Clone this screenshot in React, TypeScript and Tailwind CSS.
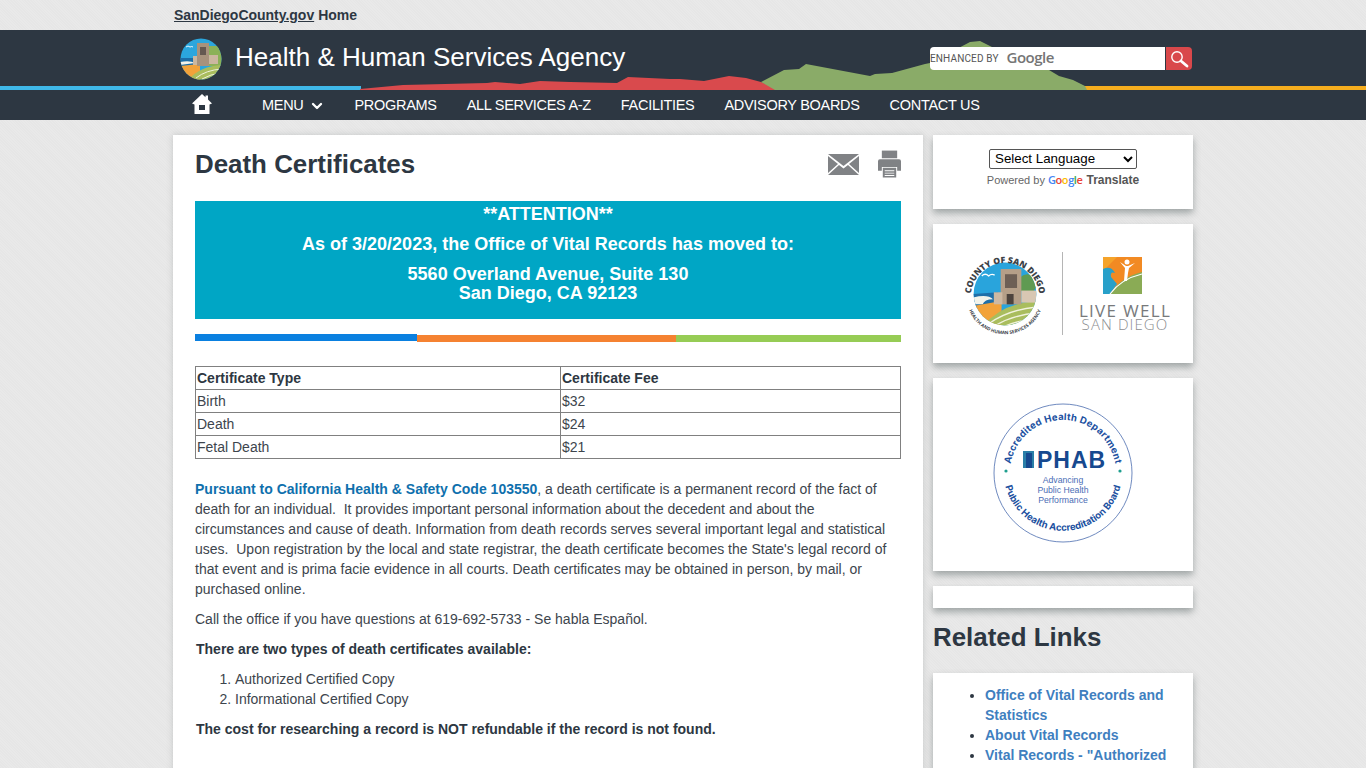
import { ChevronDown } from 'lucide-react';

const textureBg =
  'bg-[#e8e8e8] bg-[repeating-linear-gradient(45deg,#e6e6e6_0,#e6e6e6_1px,#e9e9e9_1px,#e9e9e9_2px)]';

function HillsBand() {
  return (
    <svg className="absolute left-0 top-0 w-[1366px] h-[60px]" viewBox="0 30 1366 60">
      <rect x="0" y="86" width="361" height="4" fill="#3fb8e8" />
      <rect x="1080" y="86" width="286" height="4" fill="#f5ad1e" />
      <polygon
        fill="#d94a4d"
        points="360,90 360,89 403,85 487,83 495,82 520,84 540,81 570,82 617,83 628,77 670,79 680,79 704,81 729,76 746,78 761,82 782,90"
      />
      <polygon
        fill="#8aab68"
        points="761,82 784,70 799,69 806,64 870,76 875,74 892,73 925,64 930,63 970,42 980,41 992,47 1049,70 1059,76 1073,80 1085,86 1087,90 775,90"
      />
    </svg>
  );
}

function CountySeal({ size }: { size: number }) {
  return (
    <svg width={size} height={size} viewBox="0 0 100 100">
      <defs>
        <path id="sealTop" d="M 10 54 A 40 40 0 1 1 90 54" />
        <path id="sealBottom" d="M 5 58 A 45.5 45.5 0 0 0 95 58" />
        <clipPath id="sealClip">
          <circle cx="50" cy="50" r="36.5" />
        </clipPath>
      </defs>
      <g clipPath="url(#sealClip)">
        <rect x="0" y="0" width="100" height="100" fill="#29a4dc" />
        <circle cx="76" cy="38" r="11" fill="#5f9a52" />
        <path d="M13 50 L42 48 L42 66 L13 66 Z" fill="#1f6fa8" />
        <path d="M13 54 Q30 50 36 56 Q26 56 24 62 L13 62 Z" fill="#f3f3ea" />
        <path d="M13 64 L46 58 L46 90 L13 90 Z" fill="#f2a23a" />
        <path d="M24 88 Q46 60 90 58 L90 95 L24 95 Z" fill="#a9bd5d" />
        <path d="M32 84 Q54 68 88 65 M38 87 Q60 74 88 72 M46 89 Q66 80 88 79" stroke="#f0f2dc" strokeWidth="1.6" fill="none" />
        <rect x="45" y="21" width="24" height="41" fill="#b59f88" />
        <rect x="37" y="48" width="10" height="14" fill="#cdb9a3" />
        <rect x="69" y="46" width="18" height="14" fill="#d8c7b3" />
        <rect x="50" y="27" width="14" height="16" fill="#6d5f55" />
        <rect x="52" y="50" width="8" height="12" fill="#4d433d" />
        <path d="M23 29 Q27 25 31 29 Q34 26 38 28" stroke="#fff" strokeWidth="1.5" fill="none" />
      </g>
      <text fontFamily="Open Sans, sans-serif" fontSize="10" fontWeight="800" fill="#3b4248">
        <textPath href="#sealTop" startOffset="50%" textAnchor="middle">
          COUNTY OF SAN DIEGO
        </textPath>
      </text>
      <text fontFamily="Open Sans, sans-serif" fontSize="5.4" fontWeight="700" fill="#3b4248">
        <textPath href="#sealBottom" startOffset="50%" textAnchor="middle">
          HEALTH AND HUMAN SERVICES AGENCY
        </textPath>
      </text>
    </svg>
  );
}

function HeaderLogo() {
  return (
    <svg width="42" height="42" viewBox="0 0 42 42">
      <defs>
        <clipPath id="hdrClip">
          <circle cx="21" cy="21" r="20.5" />
        </clipPath>
      </defs>
      <g clipPath="url(#hdrClip)">
        <rect width="42" height="42" fill="#2ba6dd" />
        <rect x="28" y="8" width="14" height="20" fill="#8bb158" />
        <path d="M0 20 L18 20 L14 28 L0 28 Z" fill="#1d6da6" />
        <path d="M0 24 Q10 22 15 25 L0 27 Z" fill="#f3f3ea" />
        <path d="M0 28 L20 26 L20 42 L0 42 Z" fill="#f2a23a" />
        <path d="M8 42 Q20 28 42 27 L42 42 Z" fill="#a9bd5d" />
        <path d="M16 40 Q26 32 42 31 M22 41 Q30 36 42 35" stroke="#eef0da" strokeWidth="1" fill="none" />
        <rect x="17" y="5" width="12" height="23" fill="#a8927c" />
        <rect x="13" y="18" width="4" height="9" fill="#cbb7a0" />
        <rect x="29" y="17" width="9" height="9" fill="#cbb7a0" />
        <rect x="20" y="9" width="6" height="8" fill="#655850" />
        <path d="M6 9 Q8 7 10 9 Q12 8 13 9" stroke="#fff" strokeWidth="0.9" fill="none" />
      </g>
    </svg>
  );
}

function LiveWellLogo() {
  return (
    <div className="flex flex-col items-center w-[88px]">
      <svg className="mr-[5px] mt-px" width="39" height="37" viewBox="0 0 39 37">
        <rect width="39" height="37" fill="#f28a23" />
        <path d="M0 0 H14 L0 14 Z" fill="#f5a32a" />
        <path d="M0 12 Q8 8 12 16 Q7 14 8 20 L14 27 L7 37 L0 37 Z" fill="#28a0c9" />
        <path d="M7 37 Q18 20 39 15 L39 37 Z" fill="#8aab55" />
        <path d="M7 37 Q18 22 39 17" stroke="#fff" strokeWidth="1.2" fill="none" />
        <circle cx="24" cy="5" r="2.5" fill="#fff" />
        <path d="M17 5 L22 11 L21 24 L24 24 L25 16 L26 11 L32 6 L25 9 L23 9 Z" fill="#fff" />
      </svg>
      <div className="mt-[9px] text-[17px] leading-[15px] tracking-[1.3px] text-[#77797b] font-['Open_Sans',sans-serif] whitespace-nowrap">
        LIVE WELL
      </div>
      <div className="text-[15px] leading-[13px] tracking-[1.1px] font-light text-[#8b8d8f] font-['Open_Sans',sans-serif] whitespace-nowrap">
        SAN DIEGO
      </div>
    </div>
  );
}

function PhabSeal() {
  return (
    <svg className="mb-[3px]" width="140" height="140" viewBox="0 0 140 140">
      <defs>
        <path id="phabTop" d="M 17.5 78 A 53.1 53.1 0 1 1 122.5 78" />
        <path id="phabBottom" d="M 11 76 A 59.5 59.5 0 0 0 129 76" />
      </defs>
      <circle cx="70" cy="70" r="69" fill="#fff" stroke="#4a6cae" strokeWidth="0.8" />
      <text fontFamily="Inter, sans-serif" fontSize="9.5" fontWeight="700" fill="#20509f" letterSpacing="0.25">
        <textPath href="#phabTop" startOffset="50%" textAnchor="middle">
          Accredited Health Department
        </textPath>
      </text>
      <text fontFamily="Inter, sans-serif" fontSize="9.5" fontWeight="700" fill="#20509f">
        <textPath href="#phabBottom" startOffset="50%" textAnchor="middle">
          Public Health Accreditation Board
        </textPath>
      </text>
      <circle cx="13" cy="68" r="1.6" fill="#1f9f8f" />
      <circle cx="127" cy="68" r="1.6" fill="#1f9f8f" />
      <path d="M30 48 H41 V65 H30 Z" fill="#2a7fa8" />
      <path d="M33 50 H39 V65 H33 Z" fill="#17498f" />
      <text x="44" y="65" fontFamily="Liberation Sans, sans-serif" fontSize="23" fontWeight="700" fill="#17498f" letterSpacing="1">
        PHAB
      </text>
      <text textAnchor="middle" fontFamily="Liberation Sans, sans-serif" fontSize="8.7" fill="#4a6db5">
        <tspan x="70" y="80">Advancing</tspan>
        <tspan x="70" y="90">Public Health</tspan>
        <tspan x="70" y="100">Performance</tspan>
      </text>
    </svg>
  );
}

function SideCard({ className, children }: { className: string; children?: React.ReactNode }) {
  return (
    <div className={`bg-white shadow-[0_4px_7px_rgba(70,85,85,0.45)] ${className}`}>{children}</div>
  );
}

const navItems = ['PROGRAMS', 'ALL SERVICES A-Z', 'FACILITIES', 'ADVISORY BOARDS', 'CONTACT US'];

const rows = [
  ['Birth', '$32'],
  ['Death', '$24'],
  ['Fetal Death', '$21'],
];

export default function App() {
  return (
    <div className={`h-[768px] overflow-hidden text-[#2d3742] font-['Liberation_Sans',Arial,sans-serif] ${textureBg}`}>
      {/* Top strip */}
      <div className="h-[30px] w-[1020px] mx-auto pl-px flex items-center text-sm font-bold tracking-[-0.02px]">
        <a href="#" className="underline">SanDiegoCounty.gov</a>
        <a href="#" className="ml-1">Home</a>
      </div>

      {/* Header */}
      <header className="relative h-[90px] bg-[#2d3742]">
        <HillsBand />
        <div className="relative w-[1020px] mx-auto">
          <div className="h-[60px] flex items-center">
            <div className="ml-[7px] mt-[-3px] w-[42px] h-[42px]">
              <HeaderLogo />
            </div>
            <div className="ml-[13px] mt-[-6px] text-[26px] text-white whitespace-nowrap">
              Health &amp; Human Services Agency
            </div>
            <div className="ml-auto mr-px mt-[-3px] flex items-center">
              <div className="w-[235px] h-[23px] bg-white rounded-l-[4px] flex items-center">
                <span className="text-[10px] tracking-[0.15px] text-[#555] font-['Roboto',sans-serif]">ENHANCED BY</span>
                <span className="ml-2 mt-[-3px] text-[15px] font-semibold text-[#757575] font-['Open_Sans',sans-serif] tracking-[-0.5px]">Google</span>
              </div>
              <button className="ml-px w-[26px] h-[23px] bg-[#d9484b] rounded-r-[4px] flex items-center justify-center">
                <svg width="20" height="20" viewBox="0 0 20 20" fill="none" stroke="#fff">
                  <circle cx="8" cy="8" r="5.2" strokeWidth="1.4" />
                  <path d="M12 12 L18 17" strokeWidth="2.8" strokeLinecap="round" />
                </svg>
              </button>
            </div>
          </div>
          <nav className="h-[30px] pt-[2px] flex items-center text-[14.5px] tracking-[-0.3px] text-white whitespace-nowrap">
            <a href="#" className="ml-[19px] w-[70px] mt-[-5px]">
              <svg width="20" height="20" viewBox="0 0 20 20" fill="#fff">
                <path
                  d="M10 0 L13.5 3.2 V1.5 H16 V5.6 L20 9.6 L17.5 10.5 V20 H2.5 V10.5 L0 9.6 Z M7 11 V16 H13 V11 Z"
                  fillRule="evenodd"
                />
              </svg>
            </a>
            <a href="#" className="flex items-center">
              MENU
              <ChevronDown className="ml-[5px] w-[16px] h-[16px]" strokeWidth={3.5} />
            </a>
            {navItems.map((item) => (
              <a key={item} href="#" className="ml-[30px] first:ml-[26px]">
                {item}
              </a>
            ))}
          </nav>
        </div>
      </header>

      {/* Content */}
      <div className="w-[1020px] mx-auto mt-[15px] flex gap-[10px] items-start">
        <main className="w-[750px] h-[700px] bg-white shadow-[0_0_6px_rgba(90,100,100,0.25)] px-[22px] text-sm leading-5 text-[#3d454d]">
          <div className="h-[66px] flex items-start">
            <h1 className="mt-[13px] text-[25.9px] leading-[32px] font-bold text-[#2d3742]">Death Certificates</h1>
            <svg className="ml-auto mt-[19px]" width="31" height="21" viewBox="0 0 31 21" fill="#808285">
              <path d="M0 0 H31 L15.5 12 Z" />
              <path d="M0 2 L10 10 L0 19 Z M31 2 L21 10 L31 19 Z" />
              <path d="M11 11 L15.5 14.5 L20 11 L31 21 H0 Z" />
            </svg>
            <svg className="ml-[19px] mt-[15px]" width="23" height="28" viewBox="0 0 24 28" fill="#808285">
              <path d="M4 0 H20 V8 H4 Z" />
              <path d="M2 9 H22 A2 2 0 0 1 24 11 V21 H20 V17 H4 V21 H0 V11 A2 2 0 0 1 2 9 Z" />
              <path d="M5 18 H19 V28 H5 Z M7 20.5 V21.5 H17 V20.5 Z M7 23 V24 H17 V23 Z M7 25.5 V26.5 H17 V25.5 Z" fillRule="evenodd" />
            </svg>
          </div>

          <div className="h-[118px] pt-px bg-[#00a6c5] text-white text-lg font-bold text-center">
            <p className="leading-[25px]">**ATTENTION**</p>
            <p className="mt-[5px] leading-[25px]">As of 3/20/2023, the Office of Vital Records has moved to:</p>
            <p className="mt-[8px] leading-[19px]">
              5560 Overland Avenue, Suite 130
              <br />
              San Diego, CA 92123
            </p>
          </div>

          <div className="mt-[15px] h-[8px] flex">
            <div className="w-[222px] h-[7px] bg-[#0a80e0]" />
            <div className="w-[259px] h-[7px] mt-[0.5px] bg-[#f58231]" />
            <div className="flex-1 h-[7px] mt-px bg-[#96cc55]" />
          </div>

          <table className="mt-[24px] w-full border-collapse border border-[#808080] text-sm leading-[22px]">
            <thead>
              <tr>
                <th className="w-[365px] border border-[#808080] px-px text-left font-bold text-[#2d3742]">Certificate Type</th>
                <th className="border border-[#808080] px-px text-left font-bold text-[#2d3742]">Certificate Fee</th>
              </tr>
            </thead>
            <tbody>
              {rows.map(([type, fee]) => (
                <tr key={type}>
                  <td className="border border-[#808080] px-px">{type}</td>
                  <td className="border border-[#808080] px-px">{fee}</td>
                </tr>
              ))}
            </tbody>
          </table>

          <p className="mt-5">
            <a href="#" className="font-bold text-[#0f70ad]">Pursuant to California Health &amp; Safety Code 103550</a>
            , a death certificate is a permanent record of the fact of death for an individual.&nbsp; It provides important personal information about the decedent and about the circumstances and cause of death. Information from death records serves several important legal and statistical uses.&nbsp; Upon registration by the local and state registrar, the death certificate becomes the State's legal record of that event and is prima facie evidence in all courts. Death certificates may be obtained in person, by mail, or purchased online.
          </p>
          <p className="mt-[10px]">Call the office if you have questions at 619-692-5733 - Se habla Español.</p>
          <p className="mt-[10px] ml-px font-bold text-[#2d3742]">There are two types of death certificates available:</p>
          <ol className="mt-[10px] pl-10 list-decimal">
            <li>Authorized Certified Copy</li>
            <li>Informational Certified Copy</li>
          </ol>
          <p className="mt-[10px] ml-px font-bold text-[#2d3742]">The cost for researching a record is NOT refundable if the record is not found.</p>
        </main>

        <aside className="w-[260px]">
          <SideCard className="h-[74px] flex flex-col items-center pt-[14px]">
            <select className="w-[148px] h-[20px] pb-[2px] border border-[#555] rounded-[2px] bg-white text-[13.33px] leading-none text-black pl-px" defaultValue="">
              <option value="">Select Language</option>
            </select>
            <div className="mt-[3px] text-[11px] leading-[16px] text-[#666] flex items-center whitespace-nowrap">
              Powered by
              <span className="ml-[3px] font-['Open_Sans',sans-serif] font-semibold text-[11px] tracking-[-0.4px]">
                <span className="text-[#4285f4]">G</span>
                <span className="text-[#ea4335]">o</span>
                <span className="text-[#fbbc05]">o</span>
                <span className="text-[#4285f4]">g</span>
                <span className="text-[#34a853]">l</span>
                <span className="text-[#ea4335]">e</span>
              </span>
              <span className="ml-[4px] text-xs font-bold text-[#555]">Translate</span>
            </div>
          </SideCard>

          <SideCard className="mt-[15px] h-[139px] flex items-center pl-[29px]">
            <CountySeal size={86} />
            <div className="ml-[14px] w-px h-[83px] bg-[#b5b5b5]" />
            <div className="ml-[18px]">
              <LiveWellLogo />
            </div>
          </SideCard>

          <SideCard className="mt-[15px] h-[193px] flex items-center justify-center">
            <PhabSeal />
          </SideCard>

          <SideCard className="mt-[15px] h-[22px]" />

          <h2 className="mt-[14px] text-[25.9px] leading-[30px] font-bold text-[#2d3742]">Related Links</h2>

          <SideCard className="mt-[21px] h-[200px] py-3">
            <ul className="pl-[52px] pr-[20px] list-disc text-sm leading-5 font-bold text-[#3f7fbf]">
              <li className="marker:text-[#2d3742]">Office of Vital Records and Statistics</li>
              <li className="marker:text-[#2d3742]">About Vital Records</li>
              <li className="marker:text-[#2d3742]">Vital Records - "Authorized Certified Copy"</li>
            </ul>
          </SideCard>
        </aside>
      </div>
    </div>
  );
}
